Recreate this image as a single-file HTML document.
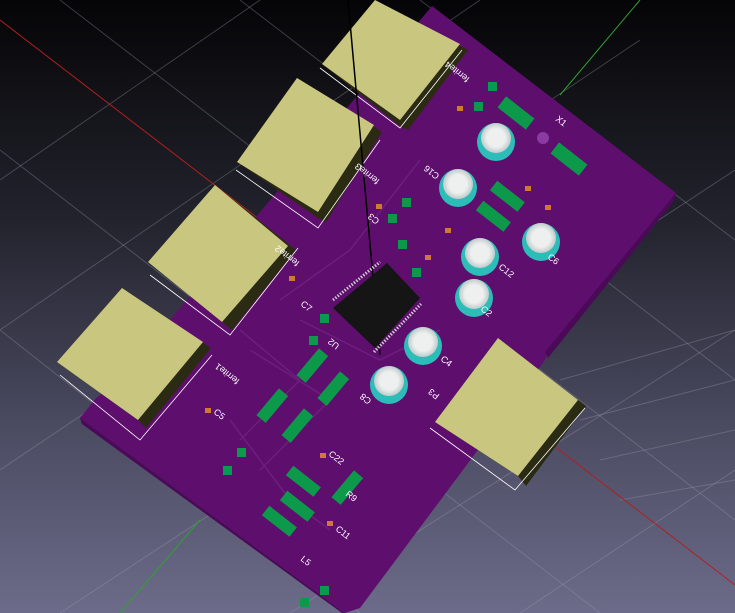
<!DOCTYPE html>
<html><head><style>
html,body{margin:0;padding:0;width:735px;height:613px;overflow:hidden;background:#222}
svg{display:block}
text{font-family:"Liberation Sans",sans-serif;fill:#fff;font-size:9px}
</style></head><body>
<svg width="735" height="613" viewBox="0 0 735 613" xmlns="http://www.w3.org/2000/svg">
<defs>
<linearGradient id="bg" x1="0" y1="0" x2="0" y2="1">
<stop offset="0" stop-color="#050507"/><stop offset="0.35" stop-color="#22222c"/><stop offset="0.7" stop-color="#4b4b62"/><stop offset="1" stop-color="#6c6c8a"/>
</linearGradient>
<radialGradient id="cap" cx="0.5" cy="0.5" r="0.5"><stop offset="0.6" stop-color="#eef0f0"/><stop offset="1" stop-color="#c0caca"/></radialGradient>
</defs>
<rect width="735" height="613" fill="url(#bg)"/>
<g stroke="#9a9ab0" stroke-opacity="0.35" stroke-width="1" fill="none">
<path d="M0 180 L260 0 M0 330 L480 0 M0 470 L640 40 M60 613 L735 170 M290 613 L735 330 M520 613 L735 470"/>
<path d="M60 0 L735 520 M0 150 L600 613 M240 0 L735 380 M0 330 L360 613 M420 0 L735 240"/>
<path d="M560 380 L735 330 M580 420 L735 380 M600 460 L735 430 M620 500 L735 480"/>
</g>
<path d="M0 20 L735 585" stroke="#b02020" stroke-width="1"/>
<path d="M640 0 L560 95 M200 520 L120 613" stroke="#30a030" stroke-width="1"/>
<!-- board -->
<polygon points="432,6 676,193 548,352 545,360 360,608 345,613 80,418 96,398 120,380" fill="#5e0f6e"/>
<polygon points="676,193 674,201 548,358 545,352" fill="#4a0a58"/>
<polygon points="80,418 345,613 342,613 82,424" fill="#4a0a58"/>
<!-- traces -->
<g stroke="#6c1f7c" stroke-width="1.5" fill="none">
<path d="M240 330 L300 380 L240 440 M250 350 L330 400 L260 470 M230 420 L290 500 L330 530 M280 300 L350 250 L420 160 M300 320 L380 360 L440 330"/>
</g>
<!-- connectors -->
<g stroke-width="1">
<polygon points="322,64 375,0 468,50 408,130 400,126" fill="#2b2a12"/>
<polygon points="322,64 375,0 460,44 400,120" fill="#c9c77f"/>
<polygon points="237,162 297,78 382,132 326,222 318,218" fill="#2b2a12"/>
<polygon points="237,162 297,78 374,125 318,212" fill="#c9c77f"/>
<polygon points="148,262 215,185 296,250 232,330 222,322" fill="#2b2a12"/>
<polygon points="148,262 215,185 288,246 222,322" fill="#c9c77f"/>
<polygon points="57,362 122,288 211,348 146,428 138,420" fill="#2b2a12"/>
<polygon points="57,362 122,288 203,342 138,420" fill="#c9c77f"/>
<polygon points="435,422 498,338 586,406 526,486 518,476" fill="#2b2a12"/>
<polygon points="435,422 498,338 578,400 518,476" fill="#c9c77f"/>
</g>
<g stroke="#fff" stroke-width="0.8" fill="none">
<path d="M320 68 L400 128 L462 50"/><path d="M236 170 L318 228 L380 140"/><path d="M150 275 L230 335 L298 248"/><path d="M60 375 L140 440 L212 355"/><path d="M430 428 L515 490 L585 408"/>
</g>
<line x1="348" y1="0" x2="380" y2="355" stroke="#000" stroke-width="1.5"/>
<!-- chip -->
<polygon points="333,308 387,263 420,298 375,348" fill="#151515"/>
<g stroke="#d0d0d0" stroke-width="3" stroke-dasharray="1.4 1.6">
<line x1="333" y1="300" x2="380" y2="262"/><line x1="374" y1="352" x2="421" y2="304"/>
</g>
<!-- caps -->
<g>
<circle cx="496" cy="142" r="19" fill="#2dbdb8"/><circle cx="496" cy="138" r="15" fill="url(#cap)"/>
<circle cx="458" cy="188" r="19" fill="#2dbdb8"/><circle cx="458" cy="184" r="15" fill="url(#cap)"/>
<circle cx="541" cy="242" r="19" fill="#2dbdb8"/><circle cx="541" cy="238" r="15" fill="url(#cap)"/>
<circle cx="480" cy="257" r="19" fill="#2dbdb8"/><circle cx="480" cy="253" r="15" fill="url(#cap)"/>
<circle cx="474" cy="298" r="19" fill="#2dbdb8"/><circle cx="474" cy="294" r="15" fill="url(#cap)"/>
<circle cx="423" cy="346" r="19" fill="#2dbdb8"/><circle cx="423" cy="342" r="15" fill="url(#cap)"/>
<circle cx="389" cy="385" r="19" fill="#2dbdb8"/><circle cx="389" cy="381" r="15" fill="url(#cap)"/>
</g>
<!-- pads -->
<g fill="#0c9a4a">
<rect x="498" y="106" width="36" height="14" transform="rotate(38 516 113)"/>
<rect x="551" y="152" width="36" height="14" transform="rotate(38 569 159)"/>
<rect x="488" y="82" width="9" height="9"/><rect x="474" y="102" width="9" height="9"/>
<rect x="402" y="198" width="9" height="9"/><rect x="388" y="214" width="9" height="9"/>
<rect x="412" y="268" width="9" height="9"/><rect x="398" y="240" width="9" height="9"/>
<rect x="320" y="314" width="9" height="9"/><rect x="309" y="336" width="9" height="9"/>
<rect x="237" y="448" width="9" height="9"/><rect x="223" y="466" width="9" height="9"/>
<rect x="300" y="598" width="9" height="9"/><rect x="320" y="586" width="9" height="9"/>
<rect x="295" y="360" width="35" height="12" transform="rotate(-50 312 366)"/>
<rect x="316" y="383" width="35" height="12" transform="rotate(-50 333 389)"/>
<rect x="255" y="400" width="35" height="12" transform="rotate(-50 272 406)"/>
<rect x="280" y="420" width="35" height="12" transform="rotate(-50 297 426)"/>
<rect x="490" y="190" width="35" height="12" transform="rotate(38 507 196)"/>
<rect x="476" y="210" width="35" height="12" transform="rotate(38 493 216)"/>
<rect x="286" y="475" width="35" height="12" transform="rotate(38 303 481)"/>
<rect x="280" y="500" width="35" height="12" transform="rotate(38 297 506)"/>
<rect x="262" y="515" width="35" height="12" transform="rotate(38 279 521)"/>
<rect x="330" y="482" width="35" height="12" transform="rotate(-50 347 488)"/>
</g>
<g fill="#d07a30">
<rect x="457" y="106" width="6" height="5"/><rect x="525" y="186" width="6" height="5"/><rect x="545" y="205" width="6" height="5"/>
<rect x="376" y="204" width="6" height="5"/><rect x="445" y="228" width="6" height="5"/><rect x="425" y="255" width="6" height="5"/>
<rect x="289" y="276" width="6" height="5"/><rect x="205" y="408" width="6" height="5"/><rect x="320" y="453" width="6" height="5"/><rect x="327" y="521" width="6" height="5"/>
</g>
<circle cx="543" cy="138" r="6" fill="#8a3aa0"/>
<g>
<text x="555" y="120" transform="rotate(38 555 120)">X1</text>
<text x="470" y="78" transform="rotate(218 470 78)">ferrite4</text>
<text x="380" y="180" transform="rotate(218 380 180)">ferrite3</text>
<text x="300" y="262" transform="rotate(218 300 262)">ferrite2</text>
<text x="240" y="380" transform="rotate(218 240 380)">ferrite1</text>
<text x="340" y="345" transform="rotate(218 340 345)">U2</text>
<text x="440" y="395" transform="rotate(218 440 395)">P3</text>
<text x="372" y="400" transform="rotate(218 372 400)">C8</text>
<text x="440" y="360" transform="rotate(38 440 360)">C4</text>
<text x="480" y="310" transform="rotate(38 480 310)">C2</text>
<text x="498" y="268" transform="rotate(38 498 268)">C12</text>
<text x="547" y="258" transform="rotate(38 547 258)">C6</text>
<text x="213" y="413" transform="rotate(38 213 413)">C5</text>
<text x="300" y="305" transform="rotate(38 300 305)">C7</text>
<text x="328" y="455" transform="rotate(38 328 455)">C22</text>
<text x="335" y="530" transform="rotate(38 335 530)">C11</text>
<text x="345" y="495" transform="rotate(38 345 495)">R9</text>
<text x="300" y="560" transform="rotate(38 300 560)">L5</text>
<text x="440" y="175" transform="rotate(218 440 175)">C16</text>
<text x="380" y="220" transform="rotate(218 380 220)">C3</text>
</g>
</svg>
</body></html>
